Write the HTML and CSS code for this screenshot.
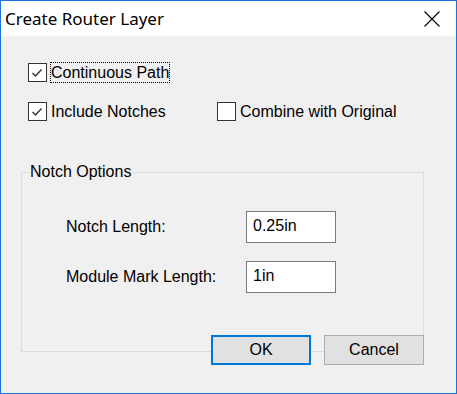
FILE: index.html
```html
<!DOCTYPE html>
<html lang="en">
<head>
    <meta charset="UTF-8">
    <title>Create Router Layer</title>
    <link rel="stylesheet" href="styles.css">
</head>
<body>
    <div class="dialog">
        <div class="titlebar">
            <span class="title">Create Router Layer</span>
            <svg class="close" width="16" height="16" viewBox="0 0 16 16">
                <path d="M0.5 0.5 L15.5 15.5 M15.5 0.5 L0.5 15.5" stroke="#000" stroke-width="1.1" fill="none"/>
            </svg>
        </div>
        <div class="content">
            <div class="checks">
                <div class="check-row">
                    <label class="check">
                        <span class="box checked">
                            <svg width="17" height="17" viewBox="0 0 17 17"><path d="M3.5 9 L6.5 12 L12.5 5.5" stroke="#333" stroke-width="1.4" fill="none"/></svg>
                        </span>
                        <span class="text focused">Continuous Path</span>
                    </label>
                </div>
                <div class="check-row">
                    <label class="check first">
                        <span class="box checked">
                            <svg width="17" height="17" viewBox="0 0 17 17"><path d="M3.5 9 L6.5 12 L12.5 5.5" stroke="#333" stroke-width="1.4" fill="none"/></svg>
                        </span>
                        <span class="text">Include Notches</span>
                    </label>
                    <label class="check">
                        <span class="box"></span>
                        <span class="text">Combine with Original</span>
                    </label>
                </div>
            </div>

            <fieldset class="group">
                <legend>Notch Options</legend>
                <div class="field">
                    <span class="field-label">Notch Length:</span>
                    <div class="input">0.25in</div>
                </div>
                <div class="field">
                    <span class="field-label">Module Mark Length:</span>
                    <div class="input">1in</div>
                </div>
            </fieldset>

            <div class="buttons">
                <button class="btn default">OK</button>
                <button class="btn">Cancel</button>
            </div>
        </div>
    </div>
</body>
</html>
```

FILE: styles.css
```css
body {
    margin: 0;
    font-family: "Liberation Sans", Arial, sans-serif;
    font-size: 16px;
    color: #000;
}

.dialog {
    width: 457px;
    height: 394px;
    box-sizing: border-box;
    border: 1px solid #1a73d9;
    background-color: #f0f0f0;
    display: flex;
    flex-direction: column;
}

.titlebar {
    height: 35px;
    background-color: #fff;
    display: flex;
    align-items: center;
    padding-left: 4px;
}

.title {
    font-family: "Noto Sans", sans-serif;
    font-size: 17px;
}

.close {
    margin-left: auto;
    margin-right: 16px;
}

.content {
    padding: 0 32px 0 20px;
}

.checks {
    padding: 27px 0 0 7px;
}

.check-row {
    display: flex;
    margin-bottom: 20px;
}

.check {
    display: flex;
    align-items: center;
    gap: 4px;
    line-height: 19px;
}

.check.first {
    width: 189px;
}

.box {
    width: 19px;
    height: 19px;
    box-sizing: border-box;
    border: 1px solid #333;
    background-color: #fff;
}

.box svg {
    display: block;
}

.focused {
    outline: 1px dotted #000;
}

.group {
    margin: 42px 0 0 0;
    padding: 30px 0 58px 0;
    border: 1px solid #dcdcdc;
    min-width: 0;
}

.group legend {
    margin-left: 7px;
    padding: 0 1px;
    line-height: 18px;
}

.field {
    display: flex;
    align-items: center;
    margin: 0 0 18px 44px;
}

.field:last-child {
    margin-bottom: 0;
}

.field-label {
    width: 180px;
}

.input {
    width: 90px;
    height: 32px;
    box-sizing: border-box;
    border: 1px solid #7a7a7a;
    background-color: #fff;
    padding: 5px 0 0 6px;
    line-height: 18px;
}

.buttons {
    display: flex;
    justify-content: flex-end;
    gap: 13px;
    margin-top: -17px;
}

.btn {
    width: 100px;
    height: 30px;
    box-sizing: border-box;
    border: 1px solid #adadad;
    background-color: #e1e1e1;
    font-family: "Liberation Sans", Arial, sans-serif;
    font-size: 16px;
    color: #000;
    padding: 0;
}

.btn.default {
    border: 2px solid #0078d7;
}
```
